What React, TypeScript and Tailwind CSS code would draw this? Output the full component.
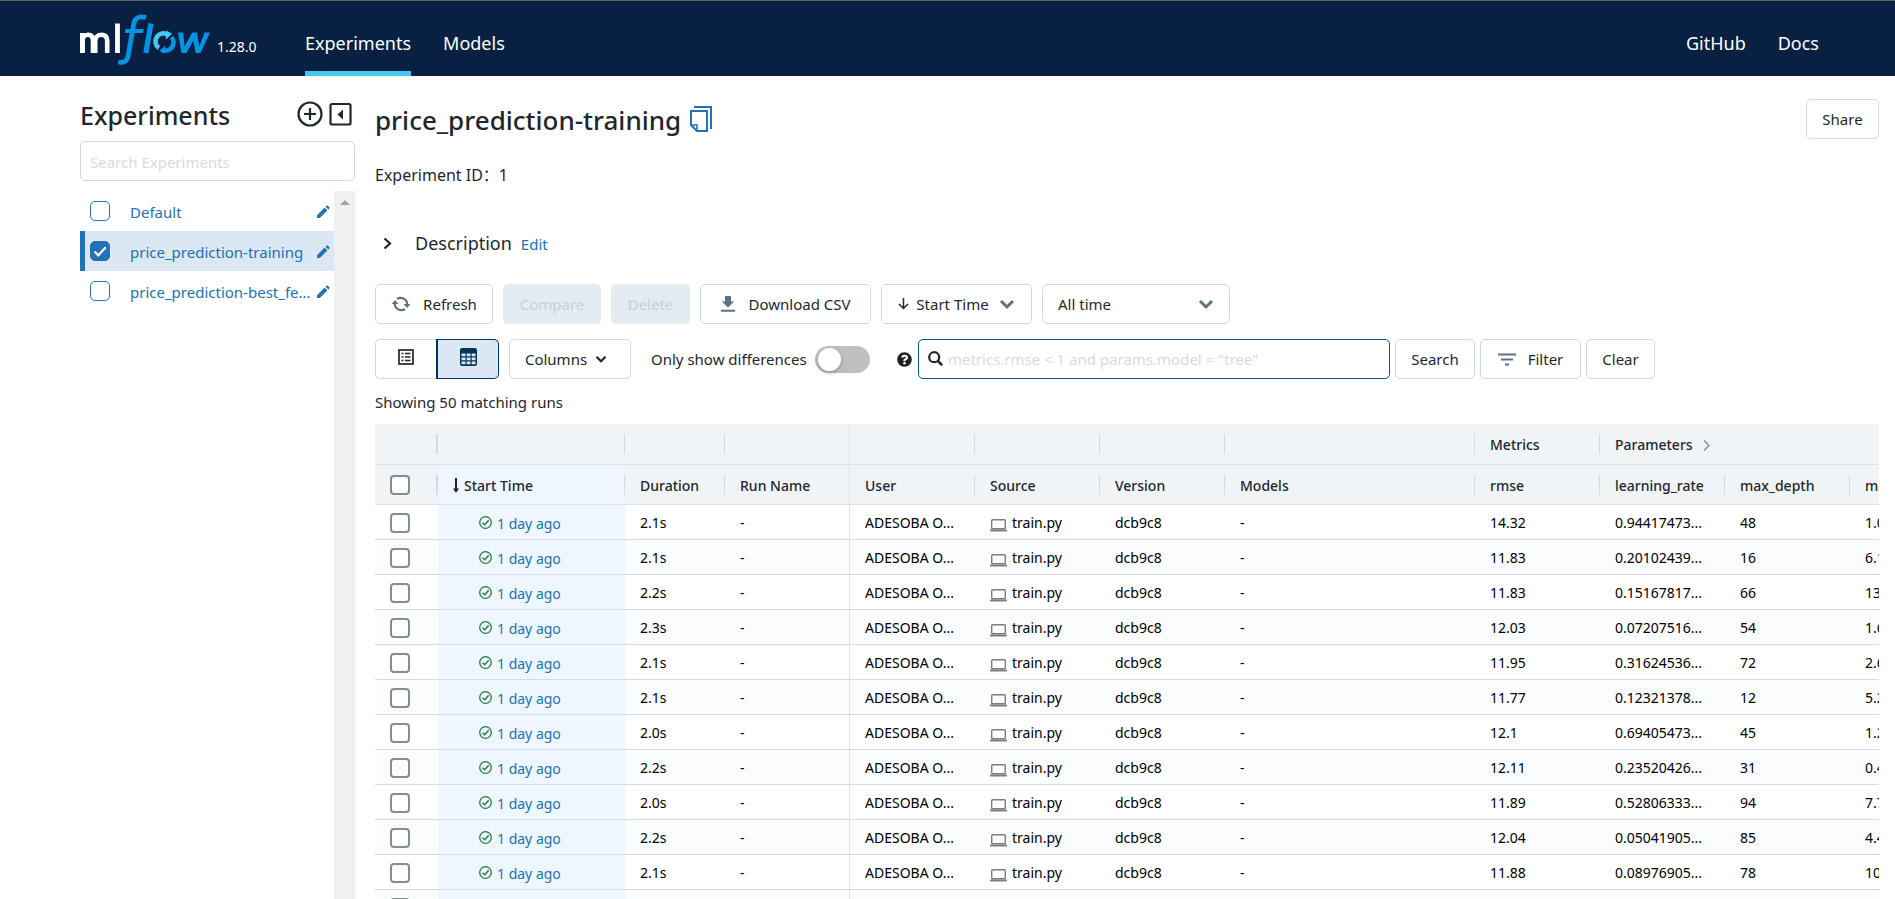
import React from "react";

const INK = "text-[#1f272d]";
const BTN =
  "flex h-10 items-center justify-center rounded-[5px] border border-[#cdd9e4] bg-white whitespace-nowrap";

const EXPERIMENTS = [
  { name: "Default", active: false },
  { name: "price_prediction-training", active: true },
  { name: "price_prediction-best_features", active: false },
];

const RUNS = [
  ["2.1s", "14.32", "0.94417473...", "48", "1.04"],
  ["2.1s", "11.83", "0.20102439...", "16", "6.15"],
  ["2.2s", "11.83", "0.15167817...", "66", "13.2"],
  ["2.3s", "12.03", "0.07207516...", "54", "1.63"],
  ["2.1s", "11.95", "0.31624536...", "72", "2.61"],
  ["2.1s", "11.77", "0.12321378...", "12", "5.22"],
  ["2.0s", "12.1", "0.69405473...", "45", "1.27"],
  ["2.2s", "12.11", "0.23520426...", "31", "0.44"],
  ["2.0s", "11.89", "0.52806333...", "94", "7.71"],
  ["2.2s", "12.04", "0.05041905...", "85", "4.49"],
  ["2.1s", "11.88", "0.08976905...", "78", "10.8"],
  ["2.1s", "11.91", "0.44182056...", "63", "3.18"],
];

function Logo() {
  return (
    <svg width="130" height="52" viewBox="0 0 130 52" fill="none" aria-label="mlflow" role="img">
      <g stroke="#fff" strokeWidth="4.800">
        <path d="M2.400 40V20" />
        <path d="M2.400 40V28.500c0-4 2-6.700 5.600-6.700s5 2.200 5 6V40" strokeWidth="4.600" />
        <path d="M15.200 40V28.500c0-4 2-6.700 6-6.700s6 2.200 6 6V40" strokeWidth="4.600" />
        <path d="M37.500 10.500V40" />
      </g>
      <g stroke="#0194e2">
        <path d="M66 4.500c-7-2-11 .5-12.300 6.500L48.300 42c-1 6-4 8.500-10 7" strokeWidth="4.800" />
        <path d="M45.500 16h18.300l-.8 4H44.800z" fill="#0194e2" stroke="none" />
        <path d="M71 10.500L65.800 40" strokeWidth="5.200" />
      </g>
      <path d="M78.900 35A8 8 0 0 1 88 21.800" stroke="#43c9ed" strokeWidth="4.600" />
      <path d="M86.500 17.500l5.500 3.300-6.300 6z" fill="#43c9ed" />
      <path d="M91.400 24.200A8 8 0 0 1 82.500 37" stroke="#0194e2" strokeWidth="4.600" />
      <path d="M85.500 32.500l-6.200 5.200 5.200 3z" fill="#0194e2" />
      <path
        d="M98 19.500h5.300l1.200 14 7.800-14h4.700l2.200 14 5.500-14h5.300l-9.500 20.500h-4.900l-2.300-12.500L106.500 40h-5z"
        fill="#0194e2"
      />
    </svg>
  );
}

function Pencil() {
  return (
    <svg width="14" height="14" viewBox="0 0 14 14" fill="#2272b4" aria-hidden="true">
      <path d="M1 10.200L8.600 2.600l2.800 2.800L3.800 13H1z" />
      <path d="M9.600 1.700l1-1c.4-.4 1-.4 1.300 0l1.400 1.400c.4.400.4 1 0 1.400l-1 1z" />
    </svg>
  );
}

function Chevron({ size, width, color }: { size: number; width: number; color: string }) {
  return (
    <svg width={size} height={size} viewBox="0 0 16 16" fill="none" stroke={color} strokeWidth={width} aria-hidden="true">
      <path d="M2 5l6 6 6-6" />
    </svg>
  );
}

function CheckCircle() {
  return (
    <svg width="13" height="13" viewBox="0 0 13 13" fill="none" stroke="#277c43" aria-hidden="true">
      <circle cx="6.500" cy="6.500" r="5.800" strokeWidth="1.300" />
      <path d="M3.500 6.800l2.200 2 4-4.500" strokeWidth="1.500" />
    </svg>
  );
}

function Laptop() {
  return (
    <svg width="17" height="14" viewBox="0 0 17 14" aria-hidden="true">
      <rect x="1.700" y="1.700" width="13.600" height="9" rx="1" fill="none" stroke="#7d7d7d" strokeWidth="1.400" />
      <path d="M0 11.500h17v1c0 .6-.4 1-1 1H1c-.6 0-1-.4-1-1z" fill="#7d7d7d" />
    </svg>
  );
}

function RowCheck({ label }: { label: string }) {
  return (
    <input
      type="checkbox"
      aria-label={label}
      className="block size-5 appearance-none rounded-[4px] border-2 border-[#868d90] bg-white"
    />
  );
}

function Tick({ wide, full }: { wide?: boolean; full?: boolean }) {
  if (full) return <span className="absolute inset-y-0 right-0 w-px bg-[#e0e4e8]" />;
  return (
    <span
      className={
        wide
          ? "absolute top-[10px] right-0 h-5 w-[2px] bg-[#d5dadf]"
          : "absolute top-[10px] right-0 h-5 w-px bg-[#d5dadf]"
      }
    />
  );
}

const HEADS = [
  "Start Time", "Duration", "Run Name", "User", "Source", "Version", "Models",
  "rmse", "learning_rate", "max_depth", "min_child_weight",
];
const GROUPS = ["", "", "", "", "", "", "", "Metrics", "Parameters"];
const CELL = "truncate px-[15px] pt-px text-left";

export default function App() {
  return (
    <div className={`flex h-screen flex-col overflow-hidden bg-white font-['Noto_Sans','Noto_Sans_CJK_SC',sans-serif] text-[15px] ${INK}`}>
      <header className="flex h-[76px] shrink-0 items-stretch border-t border-[#5f6468] bg-[#082142] pr-19 pl-20 text-[18px] text-white">
        <a href="#home" className="flex items-start pt-3">
          <Logo />
        </a>
        <span className="mt-[34px] ml-[7px] w-[88px] text-[14px] leading-6">1.28.0</span>
        <nav className="flex flex-1 items-stretch gap-8">
          <a href="#experiments" className="flex items-center border-b-[5px] border-[#43c9ed] pt-[14px]">
            Experiments
          </a>
          <a href="#models" className="flex items-center pt-[14px] pb-[5px]">Models</a>
          <a href="#github" className="ml-auto flex items-center pt-[14px] pb-[5px]">GitHub</a>
          <a href="#docs" className="flex items-center pt-[14px] pb-[5px]">Docs</a>
        </nav>
      </header>

      <div className="flex min-h-0 flex-1">
        <aside className="ml-20 flex w-[275px] shrink-0 flex-col">
          <div className="flex h-[65px] items-center pt-3 pr-[3px]">
            <h1 className="flex-1 text-[25px] leading-8 font-medium">Experiments</h1>
            <button type="button" aria-label="New experiment" className="mb-[2px]">
              <svg width="26" height="26" viewBox="0 0 26 26" fill="none" stroke="#1f272d" strokeWidth="2.200">
                <circle cx="13" cy="13" r="11.500" />
                <path d="M13 7v12M7 13h12" />
              </svg>
            </button>
            <button type="button" aria-label="Hide experiments" className="mb-[2px] ml-[6px]">
              <svg width="23" height="24" viewBox="0 0 23 24" fill="none" stroke="#1f272d" strokeWidth="2.200">
                <rect x="1.500" y="2" width="20" height="20.500" rx="1.500" />
                <path d="M14 7.500v10L8.500 12.500z" fill="#1f272d" stroke="none" />
              </svg>
            </button>
          </div>
          <input
            type="text"
            aria-label="Search Experiments"
            placeholder="Search Experiments"
            className="h-10 w-full rounded-[5px] border border-[#cdd9e4] px-[9px] pt-[2px] placeholder:text-[#dadada]"
          />
          <div className="mt-[10px] flex min-h-0 flex-1">
            <ul className="min-w-0 flex-1">
              {EXPERIMENTS.map((e) => (
                <li
                  key={e.name}
                  className={
                    e.active
                      ? "flex h-10 items-center border-l-[5px] border-[#2272b4] bg-[#dbe7f3] pr-1 pl-[5px]"
                      : "flex h-10 items-center pr-1 pl-[10px]"
                  }
                >
                  <span className="relative block size-5 shrink-0">
                    <input
                      type="checkbox"
                      aria-label={e.name}
                      defaultChecked={e.active}
                      className="block size-5 appearance-none rounded-[5px] border border-[#2272b4] bg-white checked:bg-[#2272b4]"
                    />
                    {e.active && (
                      <svg className="absolute inset-0" width="20" height="20" viewBox="0 0 20 20" fill="none" stroke="#fff" strokeWidth="2.200">
                        <path d="M4.500 10.500l3.800 3.800 7.500-8" />
                      </svg>
                    )}
                  </span>
                  <a href="#experiment" className="ml-5 min-w-0 flex-1 truncate pt-[2px] text-[#2272b4]">
                    {e.name}
                  </a>
                  <button type="button" aria-label={`Rename ${e.name}`} className="pt-[2px]">
                    <Pencil />
                  </button>
                </li>
              ))}
            </ul>
            <div className="flex w-[21px] justify-center bg-[#f0f0f0] pt-[9px]">
              <svg width="10" height="5" viewBox="0 0 10 5" fill="#a3a3a3" aria-hidden="true">
                <path d="M0 5l5-5 5 5z" />
              </svg>
            </div>
          </div>
        </aside>

        <main className="ml-5 flex min-w-0 flex-1 flex-col pr-4">
          <div className="mt-[23px] flex h-10 shrink-0 items-center">
            <h2 className="pt-px text-[26px] leading-8 font-medium">price_prediction-training</h2>
            <button type="button" aria-label="Copy name" className="ml-[9px]">
              <svg width="22" height="28" viewBox="0 0 22 28" fill="none" stroke="#2272b4" strokeWidth="2">
                <path d="M1 6h16v20H7l-6-6z" />
                <path d="M1 20h6v6" strokeWidth="1.500" />
                <path d="M4 2h17v22" />
              </svg>
            </button>
            <button type="button" className={`${BTN} ml-auto w-[73px]`}>Share</button>
          </div>
          <p className="mt-6 text-base leading-6">Experiment ID：1</p>
          <div className="mt-[44px] flex h-6 items-center">
            <svg className="ml-2" width="9" height="13" viewBox="0 0 9 13" fill="none" stroke="#1f272d" strokeWidth="2.200" aria-hidden="true">
              <path d="M1.500 1.500l5.500 5-5.500 5" />
            </svg>
            <span className="ml-[23px] text-[18px] leading-6">Description</span>
            <button type="button" className="ml-[9px] pt-[2px] text-[#2272b4]">Edit</button>
          </div>

          <div className="mt-[29px] flex gap-[10px]">
            <button type="button" className={`${BTN} w-[118px]`}>
              <svg width="20" height="18" viewBox="0 0 20 18" fill="none" stroke="#5f7281" strokeWidth="2.200" aria-hidden="true">
                <path d="M6 4A6.500 6.500 0 0 1 16.200 9.500M14 14A6.500 6.500 0 0 1 3.800 8.500" />
                <path d="M12.500 9h7l-3.500 4zM.5 9h7L4 5z" fill="#5f7281" stroke="none" />
              </svg>
              <span className="ml-3">Refresh</span>
            </button>
            <button type="button" disabled className="h-10 w-[98px] rounded-[5px] bg-[#e4ebf1] text-[#c3d1df]">Compare</button>
            <button type="button" disabled className="h-10 w-[79px] rounded-[5px] bg-[#e4ebf1] text-[#c3d1df]">Delete</button>
            <button type="button" className={`${BTN} w-[171px]`}>
              <svg width="14" height="16" viewBox="0 0 14 16" fill="#5f7281" aria-hidden="true">
                <path d="M4 0h6v5.500h3.200L7 11.500.8 5.500H4zM0 13.700h14v2H0z" />
              </svg>
              <span className="ml-[14px]">Download CSV</span>
            </button>
            <button type="button" className={`${BTN} w-[151px]`}>
              <svg width="11" height="12" viewBox="0 0 11 12" fill="none" stroke="#1f272d" strokeWidth="1.500" aria-hidden="true">
                <path d="M5.500 0v10.500M1 6l4.500 4.500L10 6" />
              </svg>
              <span className="mr-[10px] ml-[7px]">Start Time</span>
              <Chevron size={16} width={3} color="#5f7281" />
            </button>
            <div className="relative w-[188px]">
              <select aria-label="Time range" className={`${BTN} w-full appearance-none px-[15px]`}>
                <option>All time</option>
              </select>
              <span className="pointer-events-none absolute top-3 right-4">
                <Chevron size={16} width={3} color="#5f7281" />
              </span>
            </div>
          </div>

          <div className="mt-[15px] flex items-center">
            <div className="flex">
              <button type="button" aria-label="List view" className="flex h-10 w-[61px] items-center justify-center rounded-l-[5px] border border-r-0 border-[#cdd9e4] pb-1">
                <svg width="16" height="16" viewBox="0 0 16 16" fill="none" stroke="#1f272d" aria-hidden="true">
                  <rect x="1" y="1" width="14" height="14" strokeWidth="1.700" />
                  <path d="M3.500 4.500h2M3.500 8h2M3.500 11.500h2M7 4.500h5.500M7 8h5.500M7 11.500h5.500" strokeWidth="1.500" />
                </svg>
              </button>
              <button type="button" aria-label="Grid view" className="flex h-10 w-[63px] items-center justify-center rounded-r-[5px] border border-l-2 border-[#04355d] bg-[#dbe7f3] pb-1">
                <svg width="17" height="18" viewBox="0 0 17 18" fill="#04355d" aria-hidden="true">
                  <path fillRule="evenodd" d="M2 0h13a2 2 0 0 1 2 2v14a2 2 0 0 1-2 2H2a2 2 0 0 1-2-2V2a2 2 0 0 1 2-2zM1.500 5.500v2.800h4V5.500zM6.700 5.500v2.800h3.800V5.500zM11.700 5.500v2.800h3.800V5.500zM1.500 9.500v2.800h4V9.500zM6.700 9.500v2.800h3.800V9.500zM11.700 9.500v2.800h3.800V9.500zM1.500 13.500v2.800h4v-2.800zM6.700 13.500v2.800h3.800v-2.800zM11.700 13.500v2.800h3.800v-2.800z" />
                </svg>
              </button>
            </div>
            <button type="button" className={`${BTN} ml-[10px] w-[122px] pr-2`}>
              Columns
              <span className="ml-2"><Chevron size={12} width={3} color="#1f272d" /></span>
            </button>
            <label htmlFor="diff" className="ml-5 w-[158px] whitespace-nowrap">Only show differences</label>
            <span className="relative ml-[6px] block h-[27px] w-[55px]">
              <input id="diff" type="checkbox" role="switch" className="block h-[27px] w-[55px] appearance-none rounded-full bg-[#bfbfbf]" />
              <span className="pointer-events-none absolute top-[2px] left-[3px] size-[23px] rounded-full bg-white shadow-[0_2px_4px_rgba(0,35,11,0.25)]" />
            </span>
            <svg className="ml-[27px] shrink-0" width="15" height="15" viewBox="0 0 512 512" fill="#212121" aria-hidden="true">
              <path d="M504 256c0 137-111 248-248 248S8 393 8 256 119 8 256 8s248 111 248 248zM262.700 90c-54.500 0-89.300 23-116.500 63.800-3.500 5.300-2.400 12.400 2.700 16.300l34.700 26.300c5.200 3.900 12.600 3 16.700-2.100 17.900-22.700 30.100-35.800 57.300-35.800 20.400 0 45.700 13.100 45.700 33 0 15-12.400 22.700-32.500 34C247 238.500 216 255 216 296v4c0 6.600 5.400 12 12 12h56c6.600 0 12-5.400 12-12v-1.300c0-28.700 83.800-29.900 83.800-107.500C379.800 132.800 319.200 90 262.700 90zM256 338a46 46 0 1 0 0 92 46 46 0 0 0 0-92z" />
            </svg>
            <div className="relative ml-[6px] w-[472px]">
              <svg className="absolute top-3 left-[10px]" width="15" height="15" viewBox="0 0 15 15" fill="none" stroke="#1f272d" aria-hidden="true">
                <circle cx="6.200" cy="6.200" r="5" strokeWidth="2.200" />
                <path d="M9.800 9.800l4.400 4.400" strokeWidth="2.600" />
              </svg>
              <input
                type="text"
                aria-label="Search runs"
                placeholder={'metrics.rmse < 1 and params.model = "tree"'}
                className="h-10 w-full rounded-[5px] border border-[#0e538b] pl-[29px] placeholder:text-[#dadada]"
              />
            </div>
            <button type="button" className={`${BTN} ml-[5px] w-20`}>Search</button>
            <button type="button" className={`${BTN} ml-[5px] w-[101px]`}>
              <svg width="18" height="13" viewBox="0 0 18 13" fill="#5f7281" aria-hidden="true">
                <path d="M0 .5h18v2H0zM3 5.500h12v2H3zM7 10.500h4v2H7z" />
              </svg>
              <span className="ml-3">Filter</span>
            </button>
            <button type="button" className={`${BTN} ml-[5px] w-[69px]`}>Clear</button>
          </div>

          <p className="mt-3 leading-[22px]">Showing 50 matching runs</p>

          <div className="mt-[11px] min-h-0 flex-1 overflow-hidden text-[14px]">
            <table className="w-[1600px] table-fixed border-separate border-spacing-0">
              <colgroup>
                <col className="w-[63px]" />
                <col className="w-[187px]" />
                <col className="w-[100px]" />
                <col className="w-[125px]" />
                <col className="w-[125px]" />
                <col className="w-[125px]" />
                <col className="w-[125px]" />
                <col className="w-[250px]" />
                <col className="w-[125px]" />
                <col className="w-[125px]" />
                <col className="w-[125px]" />
                <col className="w-[125px]" />
              </colgroup>
              <thead className="bg-[#f0f4f7]">
                <tr className="h-[41px]">
                  <td className="relative border-b border-[#dfe4e8]"><Tick wide /></td>
                  {GROUPS.map((g, i) => (
                    <th
                      key={i}
                      scope="col"
                      colSpan={g === "Parameters" ? 3 : 1}
                      className={`${CELL} relative border-b border-[#dfe4e8] font-medium`}
                    >
                      {g}
                      {g === "Parameters" && (
                        <svg className="ml-[10px] inline align-[-1px]" width="7" height="11" viewBox="0 0 7 11" fill="none" stroke="#7f878c" strokeWidth="1.200" aria-hidden="true">
                          <path d="M1 .5l5 5-5 5" />
                        </svg>
                      )}
                      {i < 8 && <Tick full={i === 2} />}
                    </th>
                  ))}
                </tr>
                <tr className="h-10">
                  <td className="relative border-b border-[#dfe4e8] pt-px pl-[15px]">
                    <RowCheck label="Select all runs" />
                    <Tick wide />
                  </td>
                  {HEADS.map((h, i) => (
                    <th
                      key={h}
                      scope="col"
                      className={
                        i === 0
                          ? "relative truncate border-b border-[#dfe4e8] bg-[#eef7ff] pt-[2px] pl-[15px] text-left font-medium"
                          : "relative truncate border-b border-[#dfe4e8] px-[15px] pt-[2px] text-left font-medium"
                      }
                    >
                      {i === 0 && (
                        <svg className="mr-[5px] inline align-[-2px]" width="6" height="15" viewBox="0 0 6 15" fill="#1f272d" aria-hidden="true">
                          <path d="M2 0h2v10.500h2L3 15l-3-4.500h2z" />
                        </svg>
                      )}
                      {h}
                      <Tick full={i === 2} />
                    </th>
                  ))}
                </tr>
              </thead>
              <tbody className="text-black">
                {RUNS.map(([duration, rmse, rate, depth, extra], r) => (
                  <tr key={r} className="h-[35px] even:bg-[#fbfcfe] [&>td]:border-b [&>td]:border-[#d5dadf]">
                    <td className="pt-[2px] pl-[15px]"><RowCheck label={`Select run ${r + 1}`} /></td>
                    <td className="bg-[#eef7ff] pl-[41px]">
                      <span className="flex items-center gap-[5px] text-[#2272b4]">
                        <CheckCircle />
                        <a href="#run" className="pt-[2px]">1 day ago</a>
                      </span>
                    </td>
                    <td className={CELL}>{duration}</td>
                    <td className={`${CELL} relative`}>-<Tick full /></td>
                    <td className={CELL}>ADESOBA O...</td>
                    <td className={CELL}>
                      <span className="flex items-center gap-[5px]">
                        <span className="pt-1"><Laptop /></span>
                        train.py
                      </span>
                    </td>
                    <td className={CELL}>dcb9c8</td>
                    <td className={CELL}>-</td>
                    <td className={CELL}>{rmse}</td>
                    <td className={CELL}>{rate}</td>
                    <td className={CELL}>{depth}</td>
                    <td className={CELL}>{extra}</td>
                  </tr>
                ))}
              </tbody>
            </table>
          </div>
        </main>
      </div>
    </div>
  );
}
